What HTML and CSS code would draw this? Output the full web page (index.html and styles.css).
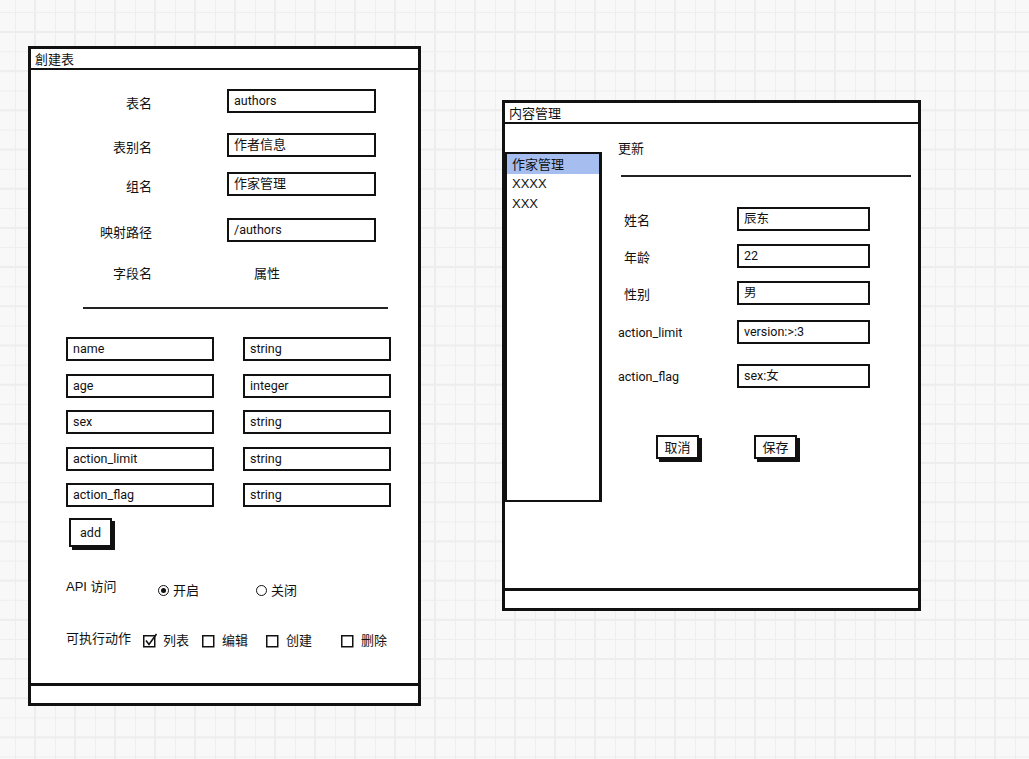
FILE: index.html
```html
<!DOCTYPE html>
<html lang="zh">
<head>
<meta charset="utf-8">
<title>Wireframes</title>
<link rel="stylesheet" href="styles.css">
</head>
<body>
<div class="canvas">
  <section class="window win-create">
    <header class="win-title">創建表</header>
    <div class="win-body create-body">
      <div class="form-row r1"><span class="lbl">表名</span><div class="input">authors</div></div>
      <div class="form-row r2"><span class="lbl">表别名</span><div class="input cjk">作者信息</div></div>
      <div class="form-row r3"><span class="lbl">组名</span><div class="input cjk">作家管理</div></div>
      <div class="form-row r4"><span class="lbl">映射路径</span><div class="input">/authors</div></div>
      <div class="col-head"><span class="lbl plain">字段名</span><span class="attr">属性</span></div>
      <hr class="divider create-divider">
      <div class="fields">
        <div class="field-row"><div class="input">name</div><div class="input">string</div></div>
        <div class="field-row"><div class="input">age</div><div class="input">integer</div></div>
        <div class="field-row"><div class="input">sex</div><div class="input">string</div></div>
        <div class="field-row"><div class="input">action_limit</div><div class="input">string</div></div>
        <div class="field-row"><div class="input">action_flag</div><div class="input">string</div></div>
      </div>
      <button class="btn add">add</button>
      <div class="opt-row api">
        <span class="opt-label">API 访问</span>
        <span class="radio"><span class="radio-dot on"></span>开启</span>
        <span class="radio"><span class="radio-dot"></span>关闭</span>
      </div>
      <div class="opt-row actions">
        <span class="opt-label">可执行动作</span>
        <span class="check"><svg class="box" viewBox="0 0 15 15" width="15" height="15"><rect x="0.75" y="2.75" width="11" height="11" fill="#fff" stroke="#111" stroke-width="1.5"/><path d="M3 7.5 L6 11.5 L13.5 1" fill="none" stroke="#111" stroke-width="1.6"/></svg>列表</span>
        <span class="check"><svg class="box" viewBox="0 0 15 15" width="15" height="15"><rect x="0.75" y="2.75" width="11" height="11" fill="#fff" stroke="#111" stroke-width="1.5"/></svg>编辑</span>
        <span class="check"><svg class="box" viewBox="0 0 15 15" width="15" height="15"><rect x="0.75" y="2.75" width="11" height="11" fill="#fff" stroke="#111" stroke-width="1.5"/></svg>创建</span>
        <span class="check"><svg class="box" viewBox="0 0 15 15" width="15" height="15"><rect x="0.75" y="2.75" width="11" height="11" fill="#fff" stroke="#111" stroke-width="1.5"/></svg>删除</span>
      </div>
    </div>
    <footer class="win-foot"></footer>
  </section>

  <section class="window win-content">
    <header class="win-title">内容管理</header>
    <div class="win-body content-body">
      <div class="list">
        <div class="list-item selected">作家管理</div>
        <div class="list-item">XXXX</div>
        <div class="list-item">XXX</div>
      </div>
      <div class="edit">
        <div class="edit-title">更新</div>
        <hr class="divider edit-divider">
        <div class="edit-row e1"><span class="elbl cjk-lbl">姓名</span><div class="input">辰东</div></div>
        <div class="edit-row e2"><span class="elbl cjk-lbl">年龄</span><div class="input">22</div></div>
        <div class="edit-row e3"><span class="elbl cjk-lbl">性别</span><div class="input">男</div></div>
        <div class="edit-row e4"><span class="elbl">action_limit</span><div class="input">version:&gt;:3</div></div>
        <div class="edit-row e5"><span class="elbl">action_flag</span><div class="input">sex:女</div></div>
        <div class="edit-actions">
          <button class="btn small">取消</button>
          <button class="btn small">保存</button>
        </div>
      </div>
    </div>
    <footer class="win-foot"></footer>
  </section>
</div>
</body>
</html>
```

FILE: styles.css
```css
html, body {
  margin: 0;
  padding: 0;
}

body {
  width: 1029px;
  height: 759px;
  overflow: hidden;
  background-color: #f8f8f8;
  background-image:
    linear-gradient(to right, #eeeeee 1px, transparent 1px),
    linear-gradient(to bottom, #eeeeee 1px, transparent 1px),
    linear-gradient(to right, #ececec 2px, transparent 2px),
    linear-gradient(to bottom, #ececec 2px, transparent 2px);
  background-size: 20px 19.6px, 20px 19.6px, 40px 39.2px, 40px 39.2px;
  background-position: 15px 12px, 15px 12px, 34px 31px, 34px 31px;
  font-family: "Liberation Sans", "Noto Sans CJK SC", sans-serif;
  font-size: 13px;
  color: #111;
}

.canvas {
  position: relative;
  width: 1029px;
  height: 759px;
}

/* windows */
.window {
  position: absolute;
  box-sizing: border-box;
  border: 3px solid #111;
  background: #fff;
  display: flex;
  flex-direction: column;
}

.win-create {
  left: 28px;
  top: 46px;
  width: 393px;
  height: 660px;
}

.win-content {
  left: 502px;
  top: 100px;
  width: 419px;
  height: 511px;
}

.win-title {
  height: 19px;
  line-height: 19px;
  border-bottom: 2px solid #111;
  padding-left: 4px;
  font-family: "Noto Sans CJK SC", sans-serif;
  font-size: 13px;
}

.win-body {
  flex: 1;
  min-height: 0;
}

.win-foot {
  height: 17px;
  border-top: 3px solid #111;
}

/* inputs */
.input {
  box-sizing: border-box;
  height: 24px;
  border: 2px solid #111;
  border-right-width: 2.5px;
  border-bottom-width: 2.5px;
  padding: 0 5px;
  line-height: 19px;
  font-family: Roboto, "Noto Sans CJK SC", sans-serif;
  font-size: 12.5px;
  background: #fff;
  white-space: nowrap;
  overflow: hidden;
}

.input.cjk {
  font-size: 13px;
}

/* create window */
.form-row {
  display: flex;
  align-items: center;
  height: 24px;
}

.r1 { margin-top: 19px; }
.r2 { margin-top: 20px; }
.r3 { margin-top: 15px; }
.r4 { margin-top: 22px; }

.lbl {
  box-sizing: border-box;
  width: 121px;
  text-align: right;
  padding-top: 4px;
  font-family: "Noto Sans CJK SC", sans-serif;
  font-size: 13px;
  line-height: 16px;
}

.lbl.plain {
  padding-top: 0;
}

.form-row .input {
  width: 149px;
  margin-left: 75px;
}

.col-head {
  display: flex;
  margin-top: 23px;
  height: 16px;
  line-height: 16px;
}

.attr {
  margin-left: 102px;
  font-family: "Noto Sans CJK SC", sans-serif;
  font-size: 13px;
}

.divider {
  height: 0;
  border: none;
  border-top: 2px solid #222;
}

.create-divider {
  margin: 26px 0 0 52px;
  width: 305px;
}

.fields {
  margin-top: 28px;
  padding-left: 35px;
  display: flex;
  flex-direction: column;
  gap: 12.5px;
}

.field-row {
  display: flex;
  gap: 29px;
}

.field-row .input {
  width: 148px;
}

.btn {
  box-sizing: border-box;
  border: 2px solid #111;
  background: #fff;
  box-shadow: 3px 3px 0 #111;
  padding: 0;
  color: #111;
  font-family: Roboto, "Noto Sans CJK SC", sans-serif;
}

.add {
  display: block;
  margin: 11px 0 0 38px;
  width: 43px;
  height: 29px;
  font-size: 12.5px;
}

.opt-row {
  display: grid;
  align-items: start;
  margin-left: 35px;
  line-height: 16px;
  font-family: "Noto Sans CJK SC", sans-serif;
  font-size: 13px;
}

.opt-label {
  font-family: "Liberation Sans", "Noto Sans CJK SC", sans-serif;
}

.api {
  grid-template-columns: 92px 98px auto;
  margin-top: 32px;
}

.radio {
  display: flex;
  align-items: center;
  gap: 4px;
  margin-top: 3px;
}

.radio-dot {
  box-sizing: border-box;
  width: 11px;
  height: 11px;
  border: 1.5px solid #111;
  border-radius: 50%;
  background: #fff;
  display: flex;
  align-items: center;
  justify-content: center;
}

.radio-dot.on::after {
  content: "";
  width: 5px;
  height: 5px;
  border-radius: 50%;
  background: #111;
}

.actions {
  grid-template-columns: 77px 59px 64px 75px auto;
  margin-top: 33px;
}

.check {
  display: flex;
  align-items: center;
  gap: 5px;
  margin-top: 1px;
}

.box {
  display: block;
  flex: none;
}

/* content window */
.content-body {
  display: flex;
}

.list {
  box-sizing: border-box;
  width: 97px;
  height: 350px;
  margin-top: 28px;
  border: 2px solid #111;
  border-right-width: 3px;
  border-bottom-width: 2.5px;
}

.list-item {
  height: 20px;
  line-height: 20px;
  padding-left: 5px;
  font-size: 13px;
  font-family: "Liberation Sans", "Noto Sans CJK SC", sans-serif;
}

.list-item.selected {
  background: #a6bdf0;
  font-family: "Noto Sans CJK SC", sans-serif;
}

.edit {
  flex: 1;
  padding-left: 16px;
}

.edit-title {
  margin-top: 16px;
  line-height: 16px;
  font-family: "Noto Sans CJK SC", sans-serif;
  font-size: 13px;
}

.edit-divider {
  margin: 19px 0 0 3px;
  width: 290px;
}

.edit-row {
  display: flex;
  align-items: center;
  height: 24px;
}

.e1 { margin-top: 30px; }
.e2 { margin-top: 13px; }
.e3 { margin-top: 13px; }
.e4 { margin-top: 15px; }
.e5 { margin-top: 20px; }

.elbl {
  box-sizing: border-box;
  width: 119px;
  font-family: Roboto, "Noto Sans CJK SC", sans-serif;
  font-size: 12.5px;
  line-height: 16px;
  padding-top: 1px;
}

.elbl.cjk-lbl {
  padding-left: 6px;
  padding-top: 2px;
  font-family: "Noto Sans CJK SC", sans-serif;
  font-size: 13px;
}

.edit-row .input {
  width: 133px;
}

.edit-actions {
  display: flex;
  gap: 55px;
  margin-top: 47px;
  padding-left: 38px;
}

.btn.small {
  width: 43px;
  height: 24px;
  font-family: "Noto Sans CJK SC", sans-serif;
  font-size: 13px;
  line-height: 18px;
}
```
